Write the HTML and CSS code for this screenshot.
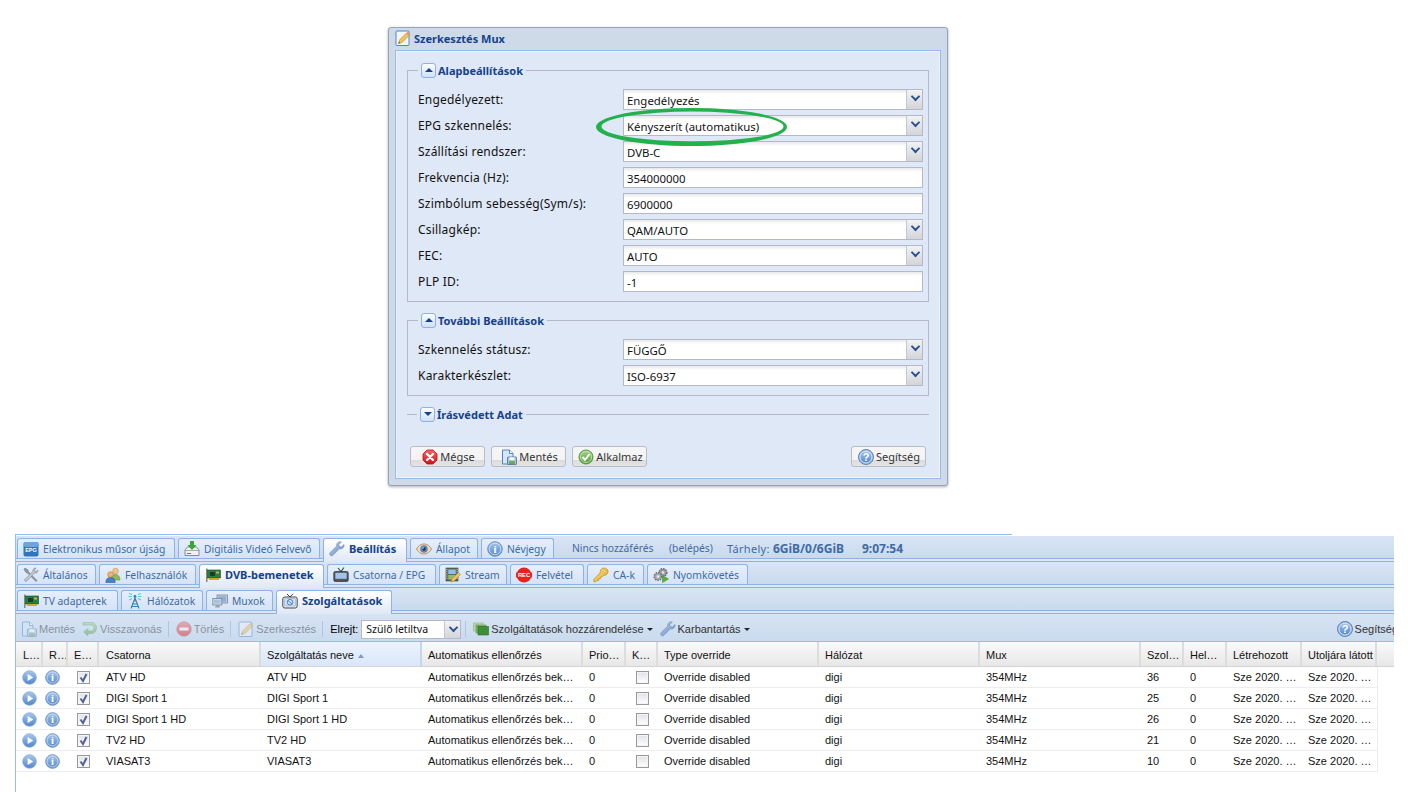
FILE: index.html
```html
<!DOCTYPE html>
<html lang="hu">
<head>
<meta charset="utf-8">
<title>Szerkesztés Mux</title>
<link rel="stylesheet" href="styles.css">
</head>
<body>
<svg class="defs" aria-hidden="true">
<defs>
<linearGradient id="gb" x1="0" y1="0" x2="0" y2="1"><stop offset="0" stop-color="#a9c8ee"/><stop offset="1" stop-color="#4f86cc"/></linearGradient>
<linearGradient id="gr" x1="0" y1="0" x2="0" y2="1"><stop offset="0" stop-color="#f5686a"/><stop offset="1" stop-color="#d80f14"/></linearGradient>
<linearGradient id="gg" x1="0" y1="0" x2="0" y2="1"><stop offset="0" stop-color="#a5d68a"/><stop offset="1" stop-color="#4d9a30"/></linearGradient>
<linearGradient id="gk" x1="0" y1="0" x2="1" y2="1"><stop offset="0" stop-color="#ffe98a"/><stop offset="1" stop-color="#dfa21e"/></linearGradient>
<linearGradient id="gw" x1="0" y1="0" x2="1" y2="1"><stop offset="0" stop-color="#c4d6ee"/><stop offset="1" stop-color="#5a86c4"/></linearGradient>
<symbol id="i-edit" viewBox="0 0 16 16"><rect x="1" y="1" width="13" height="14.500" rx="1" fill="#f4f8fd" stroke="#4f86c6"/><path d="M3.500 13.500l1-3.500L11.500 3 14 5.500 7 12.500z" fill="#f2c45c" stroke="#c48a2a" stroke-width=".7"/><path d="M11.500 3l1.200-1.200 2.500 2.500L14 5.500z" fill="#e8906a"/><path d="M3.500 13.500l.5-1.700 1.200 1.200z" fill="#555"/></symbol>
<symbol id="i-save" viewBox="0 0 16 16"><path d="M1.500 1h7l3.500 3.500V15h-10.500z" fill="#d6e6f8" stroke="#4f86c6"/><path d="M8.500 1v3.500H12" fill="#fff" stroke="#4f86c6"/><rect x="6.500" y="8" width="9" height="7.500" rx=".6" fill="#a9c4e4" stroke="#456f9f" stroke-width=".8"/><rect x="8.500" y="8.300" width="5" height="2.600" fill="#fff"/><rect x="8" y="12.200" width="6" height="3" fill="#6aa84f"/></symbol>
<symbol id="i-cancel" viewBox="0 0 16 16"><path d="M5 1h6l4 4v6l-4 4H5l-4-4V5z" fill="url(#gr)" stroke="#c01015" stroke-width=".8"/><path d="M5 5l6 6M11 5l-6 6" stroke="#fff" stroke-width="2.300" stroke-linecap="round"/></symbol>
<symbol id="i-ok" viewBox="0 0 16 16"><circle cx="8" cy="8" r="7" fill="url(#gg)" stroke="#5f8f4a"/><circle cx="8" cy="8" r="5.600" fill="none" stroke="#d7eecb" stroke-width=".7"/><path d="M4.500 8l2.500 3 4.500-6" fill="none" stroke="#fff" stroke-width="2"/></symbol>
<symbol id="i-help" viewBox="0 0 16 16"><circle cx="8" cy="8" r="7.500" fill="#8fb0d8" stroke="#5f86b6"/><circle cx="8" cy="8" r="6" fill="url(#gb)" stroke="#eaf2fb" stroke-width=".8"/><text x="8" y="12" text-anchor="middle" font-family="Liberation Sans" font-weight="700" font-size="11" fill="#fff">?</text></symbol>
<symbol id="i-epg" viewBox="0 0 16 16"><rect x="0.500" y="1" width="15" height="14.500" rx="2" fill="#2f76c2"/><rect x="0.500" y="1" width="15" height="5" rx="2" fill="#6ba4df"/><text x="8" y="10.500" text-anchor="middle" font-family="Liberation Sans" font-weight="700" font-size="5.500" fill="#fff">EPG</text></symbol>
<symbol id="i-dvr" viewBox="0 0 16 16"><path d="M1 9l2.500-3h9L15 9v5.500H1z" fill="#f1f1f1" stroke="#8a8a8a"/><path d="M1 9.500h14" stroke="#aaa"/><rect x="3" y="12" width="4" height="1" fill="#d44"/><path d="M6 0h4v4h2.500L8 9 3.500 4H6z" fill="#3aa53a"/></symbol>
<symbol id="i-wrench" viewBox="0 0 16 16"><path d="M15 3.500c.6 2.500-1.600 5-4.600 4.300L4 14.200c-.8.800-2.100.800-2.800 0s-.7-1.800 0-2.600l6.500-6.500C7.200 2.200 9.600.300 12.400 1L9.800 3.600l.6 2 2 .5z" fill="url(#gw)" stroke="#6f8fb8" stroke-width=".6"/></symbol>
<symbol id="i-eye" viewBox="0 0 16 16"><path d="M.5 8C3 4 5.500 3 8 3s5 1 7.500 5c-2.500 4-5 5-7.500 5s-5-1-7.500-5z" fill="#f3dcc0" stroke="#b88a5c"/><circle cx="8" cy="8" r="3.800" fill="#5f86bc"/><circle cx="8" cy="8" r="1.700" fill="#20344f"/><circle cx="7" cy="7" r=".7" fill="#fff"/></symbol>
<symbol id="i-info" viewBox="0 0 16 16"><circle cx="8" cy="8" r="7.300" fill="url(#gb)" stroke="#6d94c4"/><circle cx="8" cy="8" r="5.800" fill="none" stroke="#d8e6f6" stroke-width=".8"/><text x="8" y="12" text-anchor="middle" font-family="Liberation Serif" font-weight="700" font-size="11" fill="#fff">i</text></symbol>
<symbol id="i-tools" viewBox="0 0 16 16"><path d="M2 1l3 2 .5 2 8.500 8.500-1 1L4.500 6 3 5.500 1 2.500z" fill="#8e9aa8" stroke="#667" stroke-width=".5"/><path d="M14.800 3c.5 1.700-1.100 3.700-3.200 3L4 13.800c-.7.700-1.500.700-2 .200s-.5-1.300.2-2L10 4.400c-.6-2 1.200-3.800 3.100-3.200L11.200 3l.4 1.400 1.400.4z" fill="#c3cad2" stroke="#78828e" stroke-width=".6"/></symbol>
<symbol id="i-users" viewBox="0 0 16 16"><circle cx="10.500" cy="4" r="2.800" fill="#f2c58c" stroke="#c89555" stroke-width=".6"/><path d="M6.500 13c0-3.500 1.500-5.500 4-5.500s4.500 2 4.500 5.500z" fill="#8cbb5a" stroke="#6a9140" stroke-width=".6"/><circle cx="5.500" cy="7.500" r="2.800" fill="#f0b27c" stroke="#b9743d" stroke-width=".6"/><path d="M.8 15.500c0-3.500 1.800-5 4.700-5s4.700 1.500 4.700 5z" fill="#4c80c4" stroke="#2f5f9e" stroke-width=".6"/></symbol>
<symbol id="i-card" viewBox="0 0 16 16"><path d="M1 1.500h1.500V15H1z" fill="#8a8f6a"/><rect x="2.500" y="3" width="13" height="8" fill="#2a7d49" stroke="#14492a" stroke-width=".6"/><rect x="5" y="5" width="5" height="4" fill="#1d3a28"/><rect x="11" y="4.500" width="3" height="2" fill="#cdb13f"/><path d="M4 11h10v2H4z" fill="#d2a62a"/></symbol>
<symbol id="i-tv" viewBox="0 0 16 16"><path d="M5 1l3 3.500L11 .5" fill="none" stroke="#444" stroke-width="1.100"/><rect x=".8" y="4.500" width="14.400" height="10" rx="1.500" fill="#4e5358" stroke="#2a2d30" stroke-width=".7"/><rect x="2.300" y="5.800" width="11.400" height="6" fill="#9fc6ea"/><rect x="4" y="12.700" width="2" height=".9" fill="#d33"/></symbol>
<symbol id="i-tv2" viewBox="0 0 16 16"><path d="M5 1l3 3L11 .8" fill="none" stroke="#444" stroke-width="1"/><rect x=".8" y="4" width="14.400" height="11" rx="2" fill="#e9edf2" stroke="#33373c" stroke-width=".9"/><rect x="2.400" y="5.500" width="11.200" height="7.500" rx="1" fill="#cfe2f5" stroke="#7f9ab8" stroke-width=".5"/><circle cx="8" cy="9.200" r="2.800" fill="none" stroke="#4f86c6" stroke-width="1"/><path d="M6 7.500l4 3.500" stroke="#4f86c6"/></symbol>
<symbol id="i-film" viewBox="0 0 16 16"><rect x="1" y="1" width="12" height="13" fill="#5a6b57" stroke="#384438" stroke-width=".6"/><rect x="3.300" y="2.500" width="7.400" height="4.500" fill="#8fc0ea"/><rect x="3.300" y="8" width="7.400" height="4.500" fill="#9ab964"/><path d="M1.800 2v11M12.200 2v11" stroke="#ddd" stroke-dasharray="1 1.200"/><path d="M6 15l1-3 6.500-6.500 2 2L9 14z" fill="#f2c45c" stroke="#b9852a" stroke-width=".6"/></symbol>
<symbol id="i-rec" viewBox="0 0 16 16"><circle cx="8" cy="8" r="7.500" fill="#e8231e"/><rect x="0" y="5.500" width="16" height="5" fill="#e8231e"/><text x="8" y="10.200" text-anchor="middle" font-family="Liberation Sans" font-weight="700" font-size="5.800" fill="#fff">REC</text></symbol>
<symbol id="i-key" viewBox="0 0 16 16"><path d="M15 4.500c0 2.200-2 4-4.300 3.700L9 10l-1.500.2-.2 1.500-1.500.2-.2 1.500-1.500.300L1 15l-.3-2.500 6.500-6.500C6.600 3.500 8.500 1 11 1c2.200 0 4 1.500 4 3.500z" fill="url(#gk)" stroke="#b98a20" stroke-width=".7"/><circle cx="11.800" cy="4.200" r="1.200" fill="#fff3c8" stroke="#b98a20" stroke-width=".5"/></symbol>
<symbol id="i-gears" viewBox="0 0 16 16"><circle cx="10" cy="5.500" r="3.800" fill="#9a9ca5" stroke="#666a73" stroke-width="1.500" stroke-dasharray="1.500 1"/><circle cx="10" cy="5.500" r="1.300" fill="#e6e6ea"/><circle cx="5" cy="9.500" r="3.800" fill="#a8aab2" stroke="#6c7079" stroke-width="1.500" stroke-dasharray="1.500 1"/><circle cx="5" cy="9.500" r="1.300" fill="#eee"/><path d="M9.500 8.500l6 3.500-6 3.500z" fill="#58b03a" stroke="#3c8526" stroke-width=".5"/></symbol>
<symbol id="i-antenna" viewBox="0 0 16 16"><path d="M8 5L4 15.500M8 5l4 10.500M6 11h4M5 13.500h6M7 8h2" fill="none" stroke="#2f7fb8" stroke-width="1.100"/><circle cx="8" cy="3.500" r="1.400" fill="#2f7fc0"/><path d="M5 1.500l-3-1M5 3.500H1.500M5 5.500l-3 1.500M11 1.500l3-1M11 3.500h3.500M11 5.500l3 1.500" fill="none" stroke="#5fc6dc" stroke-width="1.100"/></symbol>
<symbol id="i-monitors" viewBox="0 0 16 16"><rect x="5" y="2" width="10.500" height="8" fill="#cbd2db" stroke="#7c858f" stroke-width=".8"/><rect x="6.200" y="3.200" width="8" height="5.500" fill="#8eb0d8"/><rect x=".8" y="5.500" width="9" height="6.500" fill="#d8dde3" stroke="#7c858f" stroke-width=".8"/><rect x="2" y="6.700" width="6.600" height="4" fill="#a6c3e4"/><path d="M3 14.500h5l-1-2.500H4z" fill="#9aa1a9"/></symbol>
<symbol id="i-undo" viewBox="0 0 16 16"><path d="M1 1.500h8.500c3 0 5 2.500 5 5.500s-2 5.500-5 5.500H6V15L1.500 11 6 7.500V10h3.500c1.500 0 2.500-1.500 2.500-3S11 4 9.500 4H1z" fill="url(#gg)" stroke="#4f9433" stroke-width=".6"/></symbol>
<symbol id="i-del" viewBox="0 0 16 16"><circle cx="8" cy="8" r="7.200" fill="url(#gr)" stroke="#b33" stroke-width=".7"/><rect x="3.500" y="6.500" width="9" height="3" rx=".6" fill="#fff"/></symbol>
<symbol id="i-stack" viewBox="0 0 16 16"><rect x="0.500" y="2" width="10" height="8" fill="#b9d3a8" stroke="#95b585" stroke-width=".6"/><rect x="3" y="4" width="10" height="8" fill="#83b26a" stroke="#6a9455" stroke-width=".6"/><rect x="5" y="5.500" width="10.500" height="8.500" fill="#3f8f3a" stroke="#2c6d2a" stroke-width=".6"/></symbol>
<symbol id="i-play" viewBox="0 0 16 16"><circle cx="8" cy="8" r="7.300" fill="url(#gb)" stroke="#7ea3d2" stroke-width=".7"/><path d="M6 4.300l6 3.700-6 3.700z" fill="#fff"/></symbol>
<symbol id="i-check" viewBox="0 0 11 11"><path d="M2.500 5.500L5 9l3.500-7" fill="none" stroke="#4f639c" stroke-width="2"/></symbol>
</defs>
</svg>

<section class="dialog">
  <svg class="oval" viewBox="0 0 194 42" aria-hidden="true"><path fill="#22b14c" fill-rule="evenodd" d="M2 21a95.500 19 0 1 0 191 0a95.500 19 0 1 0-191 0ZM7.500 20.500a91 15 0 1 0 182 0a91 15 0 1 0-182 0Z"/></svg>
  <header class="dialog-title"><svg class="ic"><use href="#i-edit"/></svg><span>Szerkesztés Mux</span></header>
  <div class="dialog-body">
    <fieldset class="group">
      <legend><span class="tool"><i class="tri-up"></i></span>Alapbeállítások</legend>
      <div class="field"><label>Engedélyezett:</label><div class="box"><span>Engedélyezés</span><b class="trigger"></b></div></div>
      <div class="field"><label>EPG szkennelés:</label><div class="box"><span>Kényszerít (automatikus)</span><b class="trigger"></b></div></div>
      <div class="field"><label>Szállítási rendszer:</label><div class="box"><span>DVB-C</span><b class="trigger"></b></div></div>
      <div class="field"><label>Frekvencia (Hz):</label><div class="box"><span>354000000</span></div></div>
      <div class="field"><label>Szimbólum sebesség(Sym/s):</label><div class="box"><span>6900000</span></div></div>
      <div class="field"><label>Csillagkép:</label><div class="box"><span>QAM/AUTO</span><b class="trigger"></b></div></div>
      <div class="field"><label>FEC:</label><div class="box"><span>AUTO</span><b class="trigger"></b></div></div>
      <div class="field"><label>PLP ID:</label><div class="box"><span>-1</span></div></div>
    </fieldset>
    <fieldset class="group">
      <legend><span class="tool"><i class="tri-up"></i></span>További Beállítások</legend>
      <div class="field"><label>Szkennelés státusz:</label><div class="box"><span>FÜGGŐ</span><b class="trigger"></b></div></div>
      <div class="field"><label>Karakterkészlet:</label><div class="box"><span>ISO-6937</span><b class="trigger"></b></div></div>
    </fieldset>
    <fieldset class="group collapsed">
      <legend><span class="tool"><i class="tri-down"></i></span>Írásvédett Adat</legend>
    </fieldset>
    <div class="buttons">
      <button class="btn"><svg class="ic"><use href="#i-cancel"/></svg>Mégse</button>
      <button class="btn"><svg class="ic"><use href="#i-save"/></svg>Mentés</button>
      <button class="btn"><svg class="ic"><use href="#i-ok"/></svg>Alkalmaz</button>
      <button class="btn help"><svg class="ic"><use href="#i-help"/></svg>Segítség</button>
    </div>
  </div>
</section>

<main class="app">
  <div class="topline"></div>
  <nav class="strip strip-main">
    <a class="tab"><svg class="ic"><use href="#i-epg"/></svg>Elektronikus műsor újság</a>
    <a class="tab"><svg class="ic"><use href="#i-dvr"/></svg>Digitális Videó Felvevő</a>
    <a class="tab active"><svg class="ic"><use href="#i-wrench"/></svg>Beállítás</a>
    <a class="tab"><svg class="ic"><use href="#i-eye"/></svg>Állapot</a>
    <a class="tab"><svg class="ic"><use href="#i-info"/></svg>Névjegy</a>
    <div class="status"><span class="s1">Nincs hozzáférés</span><span class="s2">(belépés)</span><span class="s3">Tárhely: <b>6GiB/0/6GiB</b></span><b class="s4">9:07:54</b></div>
  </nav>
  <nav class="strip strip-sub">
    <a class="tab"><svg class="ic"><use href="#i-tools"/></svg>Általános</a>
    <a class="tab"><svg class="ic"><use href="#i-users"/></svg>Felhasználók</a>
    <a class="tab active"><svg class="ic"><use href="#i-card"/></svg>DVB-bemenetek</a>
    <a class="tab"><svg class="ic"><use href="#i-tv"/></svg>Csatorna / EPG</a>
    <a class="tab"><svg class="ic"><use href="#i-film"/></svg>Stream</a>
    <a class="tab"><svg class="ic"><use href="#i-rec"/></svg>Felvétel</a>
    <a class="tab"><svg class="ic"><use href="#i-key"/></svg>CA-k</a>
    <a class="tab"><svg class="ic"><use href="#i-gears"/></svg>Nyomkövetés</a>
  </nav>
  <nav class="strip strip-third">
    <a class="tab"><svg class="ic"><use href="#i-card"/></svg>TV adapterek</a>
    <a class="tab"><svg class="ic"><use href="#i-antenna"/></svg>Hálózatok</a>
    <a class="tab"><svg class="ic"><use href="#i-monitors"/></svg>Muxok</a>
    <a class="tab active"><svg class="ic"><use href="#i-tv2"/></svg>Szolgáltatások</a>
  </nav>
  <div class="toolbar">
    <span class="tb off"><svg class="ic"><use href="#i-save"/></svg>Mentés</span>
    <span class="tb off"><svg class="ic"><use href="#i-undo"/></svg>Visszavonás</span>
    <i class="sep"></i>
    <span class="tb off"><svg class="ic"><use href="#i-del"/></svg>Törlés</span>
    <i class="sep"></i>
    <span class="tb off"><svg class="ic"><use href="#i-edit"/></svg>Szerkesztés</span>
    <i class="sep"></i>
    <span class="tb plain">Elrejt:</span>
    <div class="combo"><span>Szülő letiltva</span><b class="trigger"></b></div>
    <i class="sep"></i>
    <span class="tb"><svg class="ic"><use href="#i-stack"/></svg>Szolgáltatások hozzárendelése<i class="caret"></i></span>
    <span class="tb"><svg class="ic"><use href="#i-wrench"/></svg>Karbantartás<i class="caret"></i></span>
    <span class="tb end"><svg class="ic"><use href="#i-help"/></svg>Segítség</span>
  </div>
  <div class="grid">
    <div class="row head">
      <span>L…</span><span>R…</span><span>E…</span><span>Csatorna</span><span class="sorted">Szolgáltatás neve<i class="sort"></i></span><span>Automatikus ellenőrzés</span><span>Prio…</span><span>K…</span><span>Type override</span><span>Hálózat</span><span>Mux</span><span>Szol…</span><span>Hel…</span><span>Létrehozott</span><span>Utoljára látott</span><span class="fill"></span>
    </div>
    <div class="row">
      <span class="c"><svg class="ic"><use href="#i-play"/></svg></span><span class="c"><svg class="ic"><use href="#i-info"/></svg></span><span class="c"><i class="chk"><svg viewBox="0 0 11 11"><use href="#i-check"/></svg></i></span><span>ATV HD</span><span>ATV HD</span><span>Automatikus ellenőrzés bek…</span><span>0</span><span class="c"><i class="chk"></i></span><span>Override disabled</span><span>digi</span><span>354MHz</span><span>36</span><span>0</span><span>Sze 2020. …</span><span>Sze 2020. …</span>
    </div>
    <div class="row">
      <span class="c"><svg class="ic"><use href="#i-play"/></svg></span><span class="c"><svg class="ic"><use href="#i-info"/></svg></span><span class="c"><i class="chk"><svg viewBox="0 0 11 11"><use href="#i-check"/></svg></i></span><span>DIGI Sport 1</span><span>DIGI Sport 1</span><span>Automatikus ellenőrzés bek…</span><span>0</span><span class="c"><i class="chk"></i></span><span>Override disabled</span><span>digi</span><span>354MHz</span><span>25</span><span>0</span><span>Sze 2020. …</span><span>Sze 2020. …</span>
    </div>
    <div class="row">
      <span class="c"><svg class="ic"><use href="#i-play"/></svg></span><span class="c"><svg class="ic"><use href="#i-info"/></svg></span><span class="c"><i class="chk"><svg viewBox="0 0 11 11"><use href="#i-check"/></svg></i></span><span>DIGI Sport 1 HD</span><span>DIGI Sport 1 HD</span><span>Automatikus ellenőrzés bek…</span><span>0</span><span class="c"><i class="chk"></i></span><span>Override disabled</span><span>digi</span><span>354MHz</span><span>26</span><span>0</span><span>Sze 2020. …</span><span>Sze 2020. …</span>
    </div>
    <div class="row">
      <span class="c"><svg class="ic"><use href="#i-play"/></svg></span><span class="c"><svg class="ic"><use href="#i-info"/></svg></span><span class="c"><i class="chk"><svg viewBox="0 0 11 11"><use href="#i-check"/></svg></i></span><span>TV2 HD</span><span>TV2 HD</span><span>Automatikus ellenőrzés bek…</span><span>0</span><span class="c"><i class="chk"></i></span><span>Override disabled</span><span>digi</span><span>354MHz</span><span>21</span><span>0</span><span>Sze 2020. …</span><span>Sze 2020. …</span>
    </div>
    <div class="row">
      <span class="c"><svg class="ic"><use href="#i-play"/></svg></span><span class="c"><svg class="ic"><use href="#i-info"/></svg></span><span class="c"><i class="chk"><svg viewBox="0 0 11 11"><use href="#i-check"/></svg></i></span><span>VIASAT3</span><span>VIASAT3</span><span>Automatikus ellenőrzés bek…</span><span>0</span><span class="c"><i class="chk"></i></span><span>Override disabled</span><span>digi</span><span>354MHz</span><span>10</span><span>0</span><span>Sze 2020. …</span><span>Sze 2020. …</span>
    </div>
  </div>
</main>
</body>
</html>
```

FILE: styles.css
```css
* { box-sizing: border-box; }
html, body { margin: 0; height: 100%; overflow: hidden; }
body { background: #fff; font-family: "Noto Sans", "Liberation Sans", sans-serif; font-size: 11px; color: #111; padding-top: 27px; }
.defs { position: absolute; width: 0; height: 0; }
.ic { width: 16px; height: 16px; flex: none; display: block; }

/* Dialog */
.dialog { position: relative; width: 560px; height: 459px; margin-left: 388px; background: #cedae8; border: 1px solid #99a5b5; border-radius: 3px; box-shadow: 0 1px 3px rgba(60,70,90,.45); padding: 0 6px 6px; }
.oval { position: absolute; left: 205px; top: 78px; width: 194px; height: 42px; z-index: 2; }
.dialog-title { height: 22px; padding-bottom: 2px; display: flex; align-items: center; gap: 3px; color: #15428b; font-weight: 700; font-size: 11px; }
.dialog-body { height: 429px; background: #dfe8f6; border: 1px solid #99bbe8; box-shadow: inset 0 0 0 1px #eef3fb; padding: 9px 11px 0; }

.group { border: 1px solid #b5b8c8; margin: 0 0 8px; padding: 0 6px 9px 10px; min-width: 0; }
.group legend { height: 20px; padding: 0 3px; display: flex; align-items: center; gap: 2px; color: #15428b; font-weight: 700; font-size: 11px; }
.group.collapsed { border-width: 1px 0 0; padding: 0 0 0 10px; margin-bottom: 0; }
.tool { width: 15px; height: 15px; border: 1px solid #8db2e3; border-radius: 3px; background: linear-gradient(#fbfdff, #cfe0f6); display: flex; align-items: center; justify-content: center; }
.tri-up { border: 4px solid transparent; border-top: 0; border-bottom: 4px solid #15428b; }
.tri-down { border: 4px solid transparent; border-bottom: 0; border-top: 4px solid #15428b; }

.field { display: grid; grid-template-columns: 205px 300px; height: 21px; margin-top: 5px; align-items: start; font-size: 12px; }
.group legend + .field { margin-top: 9px; }
.field label { line-height: 22px; color: #111; letter-spacing: .2px; }
.box { height: 21px; border: 1px solid #b5b8c8; background: linear-gradient(#e8e8e8, #fff 4px); display: flex; align-items: center; justify-content: space-between; padding-left: 3px; line-height: 19px; overflow: hidden; font-size: 11.4px; }
.box span { padding-top: 1px; }
.trigger { position: relative; width: 16px; height: 100%; flex: none; background: linear-gradient(#f2f2f4, #d3d5d9); border-left: 1px solid #c4c7d2; }
.trigger::after { content: ""; position: absolute; left: 3px; top: 3px; width: 5px; height: 5px; margin-left: 1.500px; border-right: 2px solid #28508f; border-bottom: 2px solid #28508f; transform: rotate(45deg) scale(.95); }

.buttons { display: flex; gap: 6px; margin: 22px 0 0 3px; }
.btn { width: 75px; height: 21px; padding: 0 0 0 2px; display: flex; align-items: center; justify-content: center; gap: 2px; border: 1px solid #b8bcc4; border-radius: 3px; background: linear-gradient(#f6f6f6 0, #f3f3f3 13px, #dcdcdc 13px, #e4e4e4 100%); font: 11px "Noto Sans", sans-serif; color: #333; }
.btn.help { margin-left: auto; margin-right: 3px; padding: 0 0 0 1px; }

/* Application */
.app { width: 1379px; height: 260px; margin: 48px 0 0 15px; border-left: 1px solid #99bbe8; }
.topline { width: 996px; height: 2px; border-top: 1px solid #99bbe8; }
.strip { position: relative; height: 26px; display: grid; align-items: end; padding: 2px 0 0 1px; background: linear-gradient(#d9e5f4, #c9daee 22px, #8db2e3 22px, #8db2e3 23px, #dbe7f6 23px, #dbe7f6 25px, #8db2e3 25px); }
.strip-main { grid-template-columns: 161px 145px 87px 71px 76px 1fr; }
.strip-sub { grid-template-columns: 82px 100px 128px 112px 71px 77px 60px 104px 1fr; }
.strip-third { grid-template-columns: 104px 85px 70px 119px 1fr; }
.tab { height: 20px; margin: 0 3px 4px 0; padding-left: 5px; display: flex; align-items: center; gap: 4px; border: 1px solid #8db2e3; border-bottom: 0; border-radius: 3px 3px 0 0; background: linear-gradient(#e6effb, #d4e3f6); color: #416aa3; font-size: 10.3px; white-space: nowrap; overflow: hidden; }
.tab.active { height: 24px; margin-bottom: 0; padding-bottom: 4px; background: linear-gradient(#fff, #dfe8f6); color: #15428b; font-size: 11px; font-weight: 700; }
.status { display: flex; align-self: start; padding: 3px 0 0 15px; color: #416aa3; font-size: 10.3px; line-height: 15px; white-space: nowrap; }
.status b { font-size: 12px; }
.s1 { width: 97px; }
.s2 { width: 58px; }
.s3 { width: 135px; font-size: 11px; letter-spacing: .3px; }
.s3 b { letter-spacing: 0; }

.toolbar { height: 28px; display: flex; align-items: center; padding: 3px 0 0 5px; background: linear-gradient(#d6e3f3, #cadbef); border-bottom: 1px solid #99bbe8; font-family: "Liberation Sans", sans-serif; color: #333; white-space: nowrap; overflow: hidden; }
.tb { display: flex; align-items: center; gap: 2px; margin-right: 7px; }
.tb.off { opacity: .45; }
.tb.plain { color: #000; margin: 0 3px 0 0; }
.tb.end { margin: 0 -4px 0 auto; }
.sep { width: 1px; height: 16px; background: #aec6e4; margin: 0 7px 0 0; }
.caret { width: 0; height: 0; margin-left: 1px; border: 3px solid transparent; border-bottom: 0; border-top: 3px solid #222; }
.tb + .sep { margin-left: -1px; }
.combo { width: 100px; height: 19px; display: flex; align-items: center; justify-content: space-between; padding-left: 4px; margin-right: 3px; background: #fff; border: 1px solid #b5b8c8; font-size: 10.5px; color: #111; font-family: "Noto Sans", sans-serif; }
.combo + .sep { margin-left: 1px; }

/* Table */
.grid { font-family: "Liberation Sans", sans-serif; font-size: 11px; color: #111; }
.row { display: grid; grid-template-columns: 27px 25px 31px 162px 161px 161px 43px 32px 161px 161px 161px 43px 43px 75px 75px; width: 1362px; height: 21px; border-right: 1px solid #ededed; border-bottom: 1px solid #ededed; align-items: center; }
.row > span { padding-left: 6px; white-space: nowrap; overflow: hidden; }
.row > span:nth-child(4) { padding-left: 7px; }
.row > .c { padding: 0; display: flex; justify-content: center; }
.row > .c:nth-child(2) { padding-right: 6px; }
.row > .c .ic { width: 15px; height: 15px; }
.row.head { grid-template-columns: 27px 25px 31px 162px 161px 161px 43px 32px 161px 161px 161px 43px 43px 75px 75px 1fr; width: 100%; height: 25px; align-items: stretch; border-right: 0; border-bottom: 1px solid #d4d4d4; background: linear-gradient(#fafafa, #e7e7e8); }
.row.head > span { line-height: 26px; padding-left: 6px; border-right: 2px solid #dcdcdc; }
.row.head > span:first-child { padding-left: 7px; }
.row.head > span:nth-child(4) { padding-left: 7px; }
.row.head > .sorted { background: linear-gradient(#ecf3fd, #d9e7f9); border-right-color: #c6d6ea; }
.row.head > .fill { border: 0; }
.sort { display: inline-block; margin: 0 0 1px 4px; border: 3px solid transparent; border-top: 0; border-bottom: 4px solid #7f9cc4; vertical-align: middle; }
.chk { display: block; width: 13px; height: 13px; border: 1px solid #999; background: linear-gradient(#dfe2e8, #fff); box-shadow: inset 0 0 0 1px #f4f4f4; }
.chk svg { display: block; width: 11px; height: 11px; }
```
